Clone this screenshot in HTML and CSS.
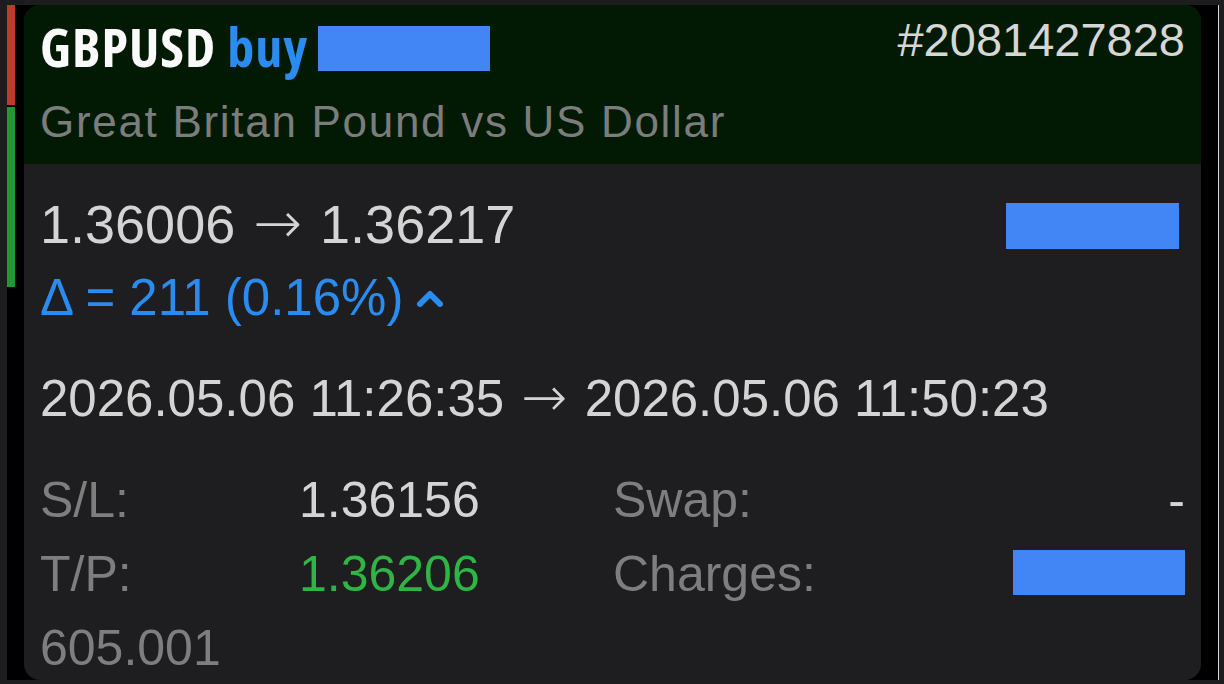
FILE: index.html
```html
<!DOCTYPE html>
<html>
<head>
    <title>GBPUSD position</title>
    <link rel="stylesheet" href="styles.css">
</head>
<body>
    <div class="screen">
        <div class="side-bars">
            <div class="bar-red"></div>
            <div class="bar-green"></div>
        </div>

        <div class="card">
            <div class="card-header">
                <div class="title-row">
                    <div class="title">
                        <span class="symbol">GBPUSD</span>
                        <span class="side">buy</span>
                        <span class="redact redact-title"></span>
                    </div>
                    <div class="ticket">#2081427828</div>
                </div>
                <div class="subtitle">Great Britan Pound vs US Dollar</div>
            </div>

            <div class="card-body">
                <div class="line price-line">
                    <span>1.36006 <span class="arrow">→</span> 1.36217</span>
                    <span class="redact redact-price"></span>
                </div>
                <div class="line delta">
                    Δ = 211 (0.16%)
                    <svg class="chevron" width="26" height="18" viewBox="0 0 26 18">
                        <path d="M3 15 L13 5 L23 15" fill="none" stroke="#2a8cf0" stroke-width="6" stroke-linejoin="round" stroke-linecap="round"/>
                    </svg>
                </div>
                <div class="line dates">2026.05.06 11:26:35 <span class="arrow">→</span> 2026.05.06 11:50:23</div>

                <div class="details">
                    <span class="label">S/L:</span>
                    <span class="value">1.36156</span>
                    <span class="label">Swap:</span>
                    <span class="value right">-</span>

                    <span class="label">T/P:</span>
                    <span class="value green">1.36206</span>
                    <span class="label">Charges:</span>
                    <span class="right"><span class="redact redact-charges"></span></span>

                    <span class="label">605.001</span>
                </div>
            </div>
        </div>
    </div>
</body>
</html>
```

FILE: styles.css
```css
body {
    margin: 0;
    background-color: #1d1d1f;
    font-family: "Liberation Sans", Arial, sans-serif;
    overflow: hidden;
}

.screen {
    display: flex;
    margin: 5px 0 0 7px;
    width: 1211px;
    height: 675px;
    background-color: #000;
    border-right: 1px solid #d8d8d8;
}

.side-bars {
    width: 8px;
    margin-right: 9px;
}

.bar-red {
    height: 100px;
    background-color: #c0392b;
}

.bar-green {
    height: 180px;
    margin-top: 2px;
    background-color: #1f9a32;
}

.card {
    width: 1177px;
    border-radius: 16px;
    overflow: hidden;
    background-color: #1e1e20;
}

.card-header {
    background-color: #021a03;
    padding: 6px 16px 14px;
}

.title-row {
    display: flex;
    justify-content: space-between;
    align-items: flex-start;
}

.title {
    display: flex;
    align-items: flex-start;
    height: 70px;
    line-height: 70px;
    font-family: "Open Sans", sans-serif;
    font-weight: 700;
    font-size: 54px;
    font-stretch: 87.5%;
    letter-spacing: 1px;
}

.symbol {
    color: #fafafa;
}

.side {
    color: #2a8cf0;
    margin-left: 11px;
}

.redact {
    display: inline-block;
    background-color: #4285f4;
}

.redact-title {
    width: 172px;
    height: 45px;
    margin: 15px 0 0 10px;
}

.ticket {
    margin-top: 3px;
    font-size: 47px;
    line-height: 52px;
    color: #d6d6d6;
}

.subtitle {
    margin-top: 13px;
    font-size: 44px;
    line-height: 56px;
    letter-spacing: 1.7px;
    color: #7c7c7c;
}

.card-body {
    padding: 23px 16px 0;
}

.line {
    font-size: 50px;
    line-height: 74px;
    height: 74px;
}

.arrow {
    display: inline-block;
    margin: 0 3px;
    font-family: "DejaVu Sans", sans-serif;
    font-size: 1.08em;
    line-height: 1;
    font-weight: 200;
}

.price-line {
    display: flex;
    justify-content: space-between;
    align-items: flex-start;
    font-size: 54px;
    color: #d4d4d4;
}

.redact-price {
    width: 173px;
    height: 46px;
    margin: 16px 6px 0 0;
}

.delta {
    display: flex;
    align-items: center;
    font-size: 51px;
    color: #2a8cf0;
}

.chevron {
    margin: 0 0 0 14px;
}

.dates {
    margin-top: 27px;
    font-size: 51px;
    color: #d4d4d4;
}

.details {
    display: grid;
    grid-template-columns: 259px 314px 1fr auto;
    grid-auto-rows: 74px;
    margin-top: 27px;
    font-size: 50px;
    line-height: 74px;
}

.label {
    color: #7e7e7e;
}

.value {
    color: #d4d4d4;
}

.value.green {
    color: #2eb545;
}

.right {
    text-align: right;
}

.redact-charges {
    width: 172px;
    height: 45px;
    margin-top: 13px;
    vertical-align: top;
}
```
